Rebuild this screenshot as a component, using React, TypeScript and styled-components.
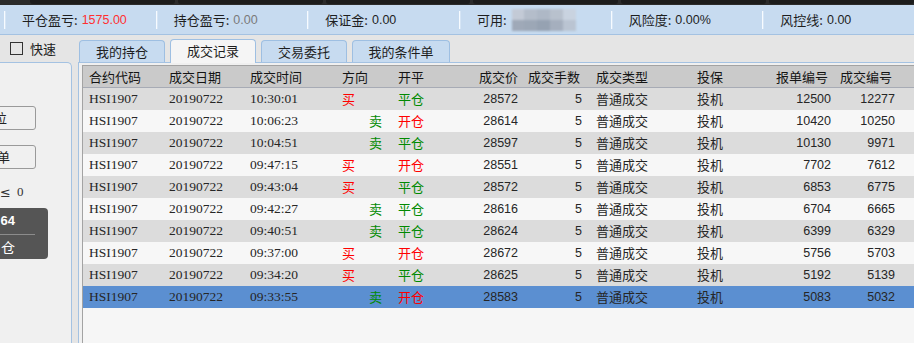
import React from "react";
import styled, { createGlobalStyle } from "styled-components";

const GlobalStyle = createGlobalStyle`
  html, body { margin: 0; padding: 0; background: #e5e5e5; overflow: hidden; }
  body {
    font-family: "Noto Sans CJK SC", "Liberation Sans", sans-serif;
    font-size: 13px;
    color: #222;
  }
  * { box-sizing: border-box; }
`;

const Screen = styled.div`
  width: 914px;
  height: 343px;
  display: flex;
  flex-direction: column;
  overflow: hidden;
`;

const TopStrip = styled.div`
  height: 5px;
  background: #2b2b2b;
  display: flex;
  gap: 3px;
  padding-left: 30px;
`;

const StripPiece = styled.div`
  width: 152px;
  height: 4px;
  background: #1c1c1c;
  border-radius: 0 0 3px 3px;
`;

const InfoBar = styled.div`
  height: 30px;
  background: #c7dbf0;
  border-bottom: 1px solid #a4c2e2;
  display: flex;
  align-items: center;
  padding-left: 4px;
`;

const Segment = styled.div`
  width: 160px;
  height: 100%;
  display: flex;
  align-items: center;
`;

const Divider = styled.div`
  width: 1px;
  height: 18px;
  background: #f7fbff;
  box-shadow: 1px 0 0 #d6e5f5;
`;

const Label = styled.span`
  margin-left: 17px;
  white-space: nowrap;
  color: #1e1e1e;
  line-height: 18px;
`;

const Value = styled.span<{ $color?: string }>`
  margin-left: 4px;
  font-family: "Liberation Sans", sans-serif;
  font-size: 12.5px;
  color: ${(p) => p.$color || "#1e1e1e"};
  white-space: nowrap;
`;

const Mosaic = styled.div`
  margin-left: 5px;
  width: 64px;
  height: 22px;
  display: grid;
  grid-template-columns: repeat(5, 1fr);
  grid-template-rows: repeat(2, 1fr);
  filter: blur(1px);
`;

const MosaicCell = styled.div<{ $c: string }>`
  background: ${(p) => p.$c};
`;

const Body = styled.div`
  flex: 1;
  display: flex;
  min-height: 0;
`;

const LeftCol = styled.div`
  width: 72px;
  display: flex;
  flex-direction: column;
`;

const CheckRow = styled.div`
  height: 27px;
  display: flex;
  align-items: center;
  padding-left: 10px;
  gap: 7px;
`;

const CheckBox = styled.div`
  width: 13px;
  height: 13px;
  border: 1px solid #333;
`;

const LeftPanel = styled.div`
  flex: 1;
  background: #f0f0f0;
  border-top: 1px solid #a4c2e2;
  border-right: 1px solid #a4c2e2;
  border-top-right-radius: 5px;
  overflow: hidden;
  display: flex;
  flex-direction: column;
  align-items: flex-start;
  padding-top: 43px;
  gap: 15px;
`;

const SideButton = styled.div<{ $pad: number }>`
  width: 80px;
  height: 24px;
  margin-left: -44px;
  border: 1px solid #9a9a9a;
  border-radius: 3px;
  background: #f0f0f0;
  text-align: right;
  padding-right: ${(p) => p.$pad}px;
  line-height: 22px;
  font-size: 13px;
  white-space: nowrap;
  color: #222;
`;

const LimitRow = styled.div`
  height: 16px;
  display: flex;
  align-items: center;
  gap: 6px;
  color: #333;
`;

const LimitSym = styled.span`
  font-family: "DejaVu Sans", sans-serif;
  font-size: 13px;
`;

const LimitNum = styled.span`
  font-family: "Liberation Serif", serif;
  font-size: 13px;
`;

const DarkBox = styled.div`
  width: 80px;
  height: 51px;
  margin-left: -32px;
  margin-top: -7px;
  background: #555555;
  border-radius: 4px;
  display: flex;
  flex-direction: column;
  padding-right: 13px;
  color: #fff;
`;

const DarkLine = styled.div<{ $h: number; $bold?: boolean }>`
  height: ${(p) => p.$h}px;
  line-height: ${(p) => p.$h}px;
  text-align: right;
  padding-right: 20px;
  font-family: ${(p) => (p.$bold ? '"Liberation Sans", sans-serif' : '"Noto Sans CJK SC", sans-serif')};
  font-weight: ${(p) => (p.$bold ? 700 : 400)};
  font-size: ${(p) => (p.$bold ? 13 : 14)}px;
  white-space: nowrap;
`;

const DarkRule = styled.div`
  height: 1px;
  background: #8c8c8c;
`;

const MainCol = styled.div`
  flex: 1;
  margin-left: 6px;
  display: flex;
  flex-direction: column;
  min-width: 0;
`;

const TabRow = styled.div`
  height: 27px;
  display: flex;
  align-items: flex-end;
  padding-left: 1px;
  gap: 5px;
`;

const Tab = styled.div<{ $active?: boolean; $w: number }>`
  width: ${(p) => p.$w}px;
  height: ${(p) => (p.$active ? 24 : 22)}px;
  margin-bottom: ${(p) => (p.$active ? -1 : 0)}px;
  position: relative;
  z-index: ${(p) => (p.$active ? 2 : 0)};
  background: ${(p) => (p.$active ? "#f5f5f5" : "#c7dbf0")};
  border: 1px solid #9ebfe2;
  border-bottom: none;
  border-radius: 4px 4px 0 0;
  text-align: center;
  line-height: ${(p) => (p.$active ? 22 : 21)}px;
  font-size: 13px;
  color: #1e1e1e;
`;

const Panel = styled.div`
  flex: 1;
  border-top: 1px solid #a4c2e2;
  border-left: 1px solid #a4c2e2;
  background: #f0f0f0;
  padding: 2px 0 0 3px;
  display: flex;
  flex-direction: column;
  min-height: 0;
`;

const Table = styled.div`
  flex: 1;
  background: #f6f6f6;
  border-top: 1px solid #a3a3a3;
  border-left: 1px solid #a3a3a3;
  display: flex;
  flex-direction: column;
`;

const COLS = "80px 81px 92px 56px 58px 74px 66px 101px 80px 66px 64px 1fr";

const HeaderRow = styled.div`
  height: 22px;
  display: grid;
  grid-template-columns: ${COLS};
  align-items: center;
  background: #cacaca;
  border-bottom: 1px solid #a7abb5;
`;

const Row = styled.div<{ $tone: "odd" | "even" | "selected" }>`
  height: 22px;
  display: grid;
  grid-template-columns: ${COLS};
  align-items: center;
  background: ${(p) =>
    p.$tone === "selected" ? "#5b8fd1" : p.$tone === "odd" ? "#dcdcdc" : "#f7f7f7"};
`;

type Kind = "cjk" | "code" | "num";

const Cell = styled.span<{ $align?: "left" | "right"; $pad?: number; $kind?: Kind; $color?: string }>`
  display: block;
  text-align: ${(p) => p.$align || "left"};
  padding-left: ${(p) => (p.$align === "right" ? 0 : 6)}px;
  padding-right: ${(p) => (p.$align === "right" ? p.$pad ?? 6 : 0)}px;
  white-space: nowrap;
  overflow: hidden;
  line-height: 22px;
  color: ${(p) => p.$color || "#262626"};
  font-family: ${(p) =>
    p.$kind === "code"
      ? '"Liberation Serif", serif'
      : p.$kind === "num"
      ? '"Liberation Sans", sans-serif'
      : '"Noto Sans CJK SC", sans-serif'};
  font-size: ${(p) => (p.$kind === "code" ? 13.5 : p.$kind === "num" ? 12.5 : 13)}px;
`;

const HeadCell = styled(Cell)`
  color: #141414;
`;

const RED = "#ff0000";
const GREEN = "#008a00";

type Trade = {
  time: string;
  side: "买" | "卖";
  oc: "开仓" | "平仓";
  price: string;
  order: string;
  deal: string;
};

const trades: Trade[] = [
  { time: "10:30:01", side: "买", oc: "平仓", price: "28572", order: "12500", deal: "12277" },
  { time: "10:06:23", side: "卖", oc: "开仓", price: "28614", order: "10420", deal: "10250" },
  { time: "10:04:51", side: "卖", oc: "平仓", price: "28597", order: "10130", deal: "9971" },
  { time: "09:47:15", side: "买", oc: "开仓", price: "28551", order: "7702", deal: "7612" },
  { time: "09:43:04", side: "买", oc: "平仓", price: "28572", order: "6853", deal: "6775" },
  { time: "09:42:27", side: "卖", oc: "平仓", price: "28616", order: "6704", deal: "6665" },
  { time: "09:40:51", side: "卖", oc: "平仓", price: "28624", order: "6399", deal: "6329" },
  { time: "09:37:00", side: "买", oc: "开仓", price: "28672", order: "5756", deal: "5703" },
  { time: "09:34:20", side: "买", oc: "平仓", price: "28625", order: "5192", deal: "5139" },
  { time: "09:33:55", side: "卖", oc: "开仓", price: "28583", order: "5083", deal: "5032" },
];

const mosaicColors = [
  "#c3cad6", "#b4bdca", "#aeb8c6", "#b8c1cd", "#c9d3e0",
  "#9fa9b8", "#9ca7b6", "#96a2b2", "#a5afbe", "#bac4d2",
];

const tabs = [
  { label: "我的持仓", w: 86 },
  { label: "成交记录", w: 86, active: true },
  { label: "交易委托", w: 86 },
  { label: "我的条件单", w: 98 },
];

export default function App() {
  return (
    <Screen>
      <GlobalStyle />
      <TopStrip>
        <StripPiece />
        <StripPiece />
        <StripPiece />
        <StripPiece />
        <StripPiece />
        <StripPiece />
      </TopStrip>
      <InfoBar>
        <Segment>
          <Divider />
          <Label>平仓盈亏:</Label>
          <Value $color="#ff3030">1575.00</Value>
        </Segment>
        <Segment>
          <Divider />
          <Label>持仓盈亏:</Label>
          <Value $color="#7a7a7a">0.00</Value>
        </Segment>
        <Segment>
          <Divider />
          <Label>保证金:</Label>
          <Value>0.00</Value>
        </Segment>
        <Segment>
          <Divider />
          <Label>可用:</Label>
          <Mosaic>
            {mosaicColors.map((c, i) => (
              <MosaicCell key={i} $c={c} />
            ))}
          </Mosaic>
        </Segment>
        <Segment>
          <Divider />
          <Label>风险度:</Label>
          <Value>0.00%</Value>
        </Segment>
        <Segment>
          <Divider />
          <Label>风控线:</Label>
          <Value>0.00</Value>
        </Segment>
      </InfoBar>
      <Body>
        <LeftCol>
          <CheckRow>
            <CheckBox />
            <span>快速</span>
          </CheckRow>
          <LeftPanel>
            <SideButton $pad={28}>平仓位</SideButton>
            <SideButton $pad={25}>条件单</SideButton>
            <LimitRow>
              <LimitSym>≤</LimitSym>
              <LimitNum>0</LimitNum>
            </LimitRow>
            <DarkBox>
              <DarkLine $h={26} $bold>
                64
              </DarkLine>
              <DarkRule />
              <DarkLine $h={24}>仓</DarkLine>
            </DarkBox>
          </LeftPanel>
        </LeftCol>
        <MainCol>
          <TabRow>
            {tabs.map((t) => (
              <Tab key={t.label} $w={t.w} $active={t.active}>
                {t.label}
              </Tab>
            ))}
          </TabRow>
          <Panel>
            <Table>
              <HeaderRow>
                <HeadCell>合约代码</HeadCell>
                <HeadCell>成交日期</HeadCell>
                <HeadCell>成交时间</HeadCell>
                <HeadCell>方向</HeadCell>
                <HeadCell>开平</HeadCell>
                <HeadCell $align="right">成交价</HeadCell>
                <HeadCell $align="right" $pad={10}>
                  成交手数
                </HeadCell>
                <HeadCell>成交类型</HeadCell>
                <HeadCell>投保</HeadCell>
                <HeadCell $align="right" $pad={9}>
                  报单编号
                </HeadCell>
                <HeadCell $align="right" $pad={9}>
                  成交编号
                </HeadCell>
                <span />
              </HeaderRow>
              {trades.map((t, i) => (
                <Row key={t.time} $tone={i === trades.length - 1 ? "selected" : i % 2 === 0 ? "odd" : "even"}>
                  <Cell $kind="code">HSI1907</Cell>
                  <Cell $kind="code">20190722</Cell>
                  <Cell $kind="code">{t.time}</Cell>
                  {t.side === "买" ? (
                    <Cell $color={RED}>买</Cell>
                  ) : (
                    <Cell $align="right" $pad={10} $color={GREEN}>
                      卖
                    </Cell>
                  )}
                  <Cell $color={t.oc === "开仓" ? RED : GREEN}>{t.oc}</Cell>
                  <Cell $align="right" $kind="num">
                    {t.price}
                  </Cell>
                  <Cell $align="right" $pad={8} $kind="num">
                    5
                  </Cell>
                  <Cell>普通成交</Cell>
                  <Cell>投机</Cell>
                  <Cell $align="right" $kind="num">
                    {t.order}
                  </Cell>
                  <Cell $align="right" $kind="num">
                    {t.deal}
                  </Cell>
                  <span />
                </Row>
              ))}
            </Table>
          </Panel>
        </MainCol>
      </Body>
    </Screen>
  );
}
